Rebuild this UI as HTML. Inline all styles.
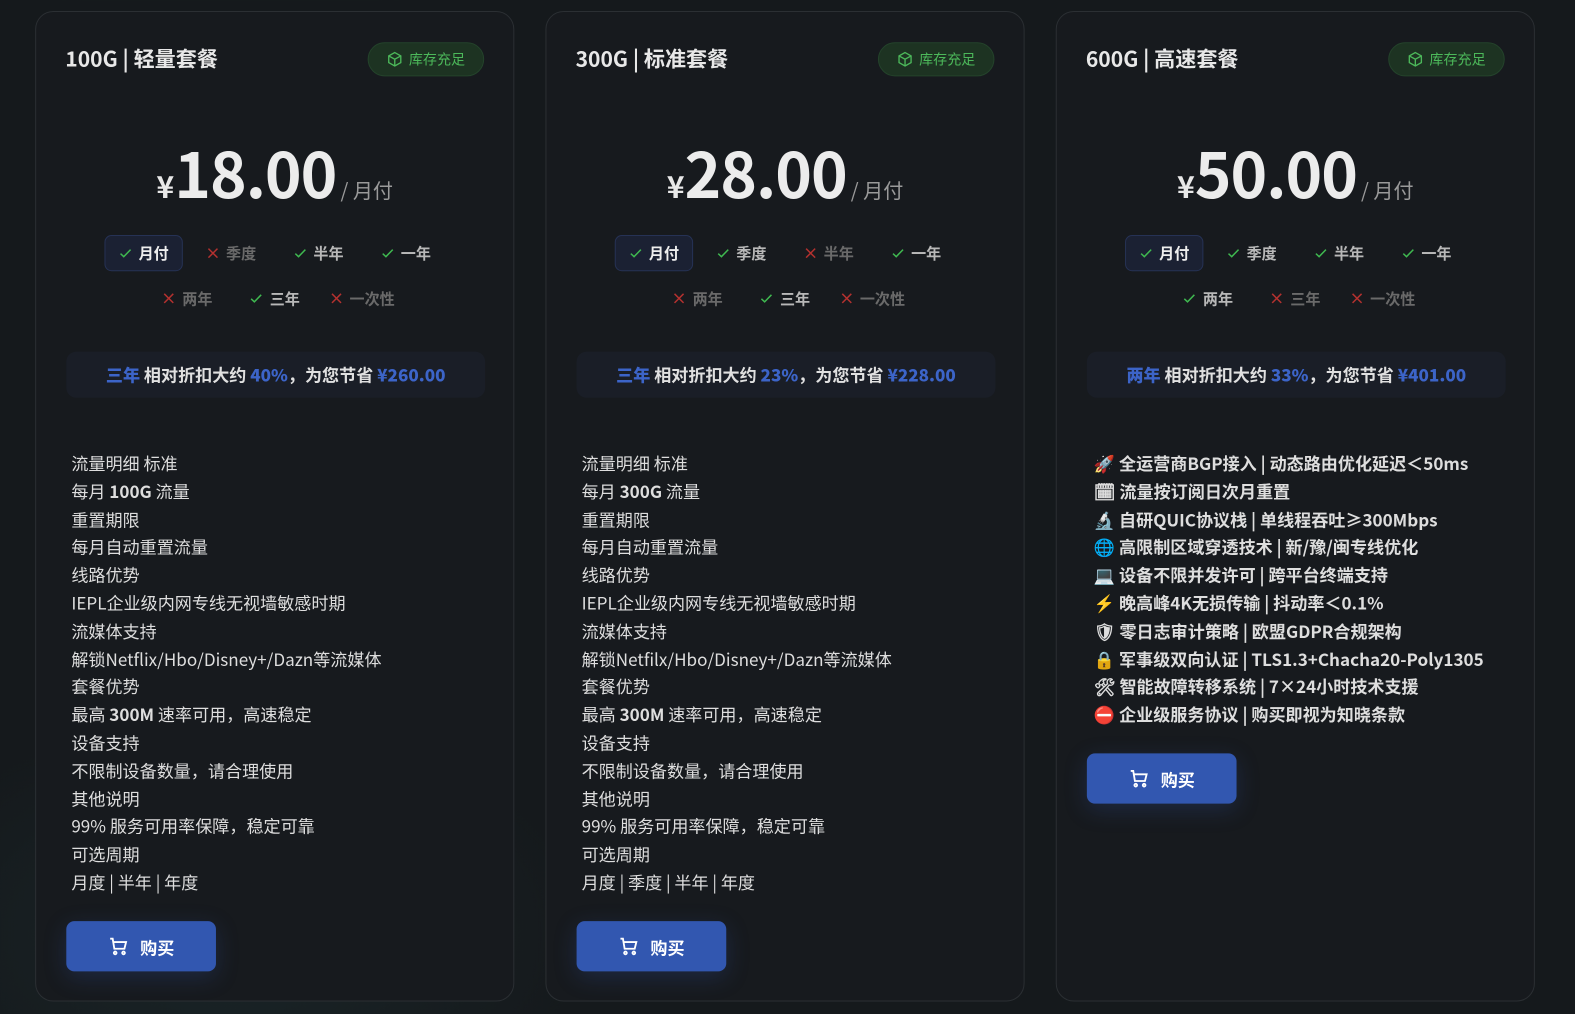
<!DOCTYPE html>
<html style="width:1575px;height:1014px;overflow:hidden"><head><meta charset="utf-8"><style>
*{box-sizing:border-box;margin:0;padding:0}
html,body{width:1575px;height:1014px;overflow:hidden}
body{background:radial-gradient(ellipse 360px 220px at 230px 935px,rgba(32,52,54,.45),rgba(0,0,0,0)),#15191c;font-family:"Noto Sans CJK SC","Liberation Sans",sans-serif;position:relative;color:#e6e6e6}
.wrap{position:absolute;left:0;top:0;width:1568px;height:1010px;transform:scale(1.0045);transform-origin:0 0}
.card{position:absolute;top:11px;width:477px;height:986px;border:1px solid #2b2f33;border-radius:18px;background:#171a1e}
.title{position:absolute;left:29px;top:31px;font-size:21px;font-weight:bold;color:#e8e8e8;line-height:30px}
.badge{position:absolute;left:330px;top:30px;width:116px;height:34px;border-radius:17px;background:#1d3322;border:1px solid #24432b;color:#4cb85a;font-size:14px;display:flex;align-items:center;justify-content:center;gap:6px}
.price{position:absolute;left:0;right:0;top:118px;text-align:center;white-space:nowrap;line-height:80px}
.price .y{font-size:30px;font-weight:bold;color:#e8e8e8}
.price .n{font-size:62px;font-weight:bold;color:#ececec;letter-spacing:-1px}
.price .u{font-size:20px;color:#9a9a9a;margin-left:4px}
.rows{position:absolute;left:0;right:0;top:222px}
.row{display:flex;justify-content:center;gap:9px;height:36px;margin-bottom:9px}
.chip{width:78px;height:36px;display:flex;align-items:center;justify-content:center;gap:6px;font-size:15px;font-weight:bold;border-radius:7px;border:1px solid transparent}
.chip.sel{background:#1b2133;border-color:#263255;color:#eee}
.chip.on{color:#b8b8b8}
.chip.off{color:#6a6a6a}
.save{position:absolute;left:30px;top:338px;width:417px;height:46px;border-radius:10px;background:#1a1e27;display:flex;align-items:center;justify-content:center;font-size:17px;font-weight:bold;color:#e0e0e0;line-height:46px}
.save b{color:#3c64c8}
.feat{position:absolute;left:35px;top:435px;font-size:17px;line-height:27.8px;color:#dedede}
.feat.e{left:37px;font-weight:bold}
.btn{position:absolute;left:30px;width:149px;height:50px;border-radius:8px;background:#3257b0;color:#fff;font-size:17px;font-weight:bold;display:flex;align-items:center;justify-content:center;gap:12px;box-shadow:0 6px 22px rgba(50,87,176,.25)}
</style></head><body>
<svg width="0" height="0" style="position:absolute;left:0;top:0"><defs>
<symbol id="ck" viewBox="0 0 14 14"><path d="M2 7.5l3.2 3L12 3.5" fill="none" stroke="#3fb950" stroke-width="1.5"/></symbol>
<symbol id="xx" viewBox="0 0 14 14"><path d="M2.5 2.5l9 9M11.5 2.5l-9 9" fill="none" stroke="#b3312f" stroke-width="1.5"/></symbol>
</defs></svg>
<div class="wrap">

<div class="card" style="left:35px">
 <div class="title">100G | 轻量套餐</div>
 <div class="badge"><svg width="16" height="16" viewBox="0 0 24 24" fill="none" stroke="#4cb85a" stroke-width="2"><path d="M12 2l9 5v10l-9 5-9-5V7z"/><path d="M3 7l9 5 9-5M12 12v10"/></svg>库存充足</div>
 <div class="price"><span class="y">¥</span><span class="n">18.00</span><span class="u">/ 月付</span></div>
 <div class="rows">
  <div class="row"><div class="chip sel"><svg width="14" height="14"><use href="#ck"/></svg>月付</div><div class="chip off"><svg width="14" height="14"><use href="#xx"/></svg>季度</div><div class="chip on"><svg width="14" height="14"><use href="#ck"/></svg>半年</div><div class="chip on"><svg width="14" height="14"><use href="#ck"/></svg>一年</div></div>
  <div class="row"><div class="chip off"><svg width="14" height="14"><use href="#xx"/></svg>两年</div><div class="chip on"><svg width="14" height="14"><use href="#ck"/></svg>三年</div><div class="chip off"><svg width="14" height="14"><use href="#xx"/></svg>一次性</div></div>
 </div>
 <div class="save"><b>三年</b>&nbsp;相对折扣大约&nbsp;<b>40%</b>，为您节省&nbsp;<b>¥260.00</b></div>
 <div class="feat">流量明细 标准<br>每月 <b>100G</b> 流量<br>重置期限<br>每月自动重置流量<br>线路优势<br>IEPL企业级内网专线无视墙敏感时期<br>流媒体支持<br>解锁Netflix/Hbo/Disney+/Dazn等流媒体<br>套餐优势<br>最高 <b>300M</b> 速率可用，高速稳定<br>设备支持<br>不限制设备数量，请合理使用<br>其他说明<br>99% 服务可用率保障，稳定可靠<br>可选周期<br>月度 | 半年 | 年度</div>
 <div class="btn" style="top:905px"><svg width="20" height="20" viewBox="0 0 24 24" fill="none" stroke="#fff" stroke-width="2.2"><path d="M2 3h3l2 12h12l2-8H6"/><circle cx="8" cy="20" r="1.6"/><circle cx="18" cy="20" r="1.6"/></svg>购买</div>
</div>

<div class="card" style="left:543px">
 <div class="title">300G | 标准套餐</div>
 <div class="badge"><svg width="16" height="16" viewBox="0 0 24 24" fill="none" stroke="#4cb85a" stroke-width="2"><path d="M12 2l9 5v10l-9 5-9-5V7z"/><path d="M3 7l9 5 9-5M12 12v10"/></svg>库存充足</div>
 <div class="price"><span class="y">¥</span><span class="n">28.00</span><span class="u">/ 月付</span></div>
 <div class="rows">
  <div class="row"><div class="chip sel"><svg width="14" height="14"><use href="#ck"/></svg>月付</div><div class="chip on"><svg width="14" height="14"><use href="#ck"/></svg>季度</div><div class="chip off"><svg width="14" height="14"><use href="#xx"/></svg>半年</div><div class="chip on"><svg width="14" height="14"><use href="#ck"/></svg>一年</div></div>
  <div class="row"><div class="chip off"><svg width="14" height="14"><use href="#xx"/></svg>两年</div><div class="chip on"><svg width="14" height="14"><use href="#ck"/></svg>三年</div><div class="chip off"><svg width="14" height="14"><use href="#xx"/></svg>一次性</div></div>
 </div>
 <div class="save"><b>三年</b>&nbsp;相对折扣大约&nbsp;<b>23%</b>，为您节省&nbsp;<b>¥228.00</b></div>
 <div class="feat">流量明细 标准<br>每月 <b>300G</b> 流量<br>重置期限<br>每月自动重置流量<br>线路优势<br>IEPL企业级内网专线无视墙敏感时期<br>流媒体支持<br>解锁Netfilx/Hbo/Disney+/Dazn等流媒体<br>套餐优势<br>最高 <b>300M</b> 速率可用，高速稳定<br>设备支持<br>不限制设备数量，请合理使用<br>其他说明<br>99% 服务可用率保障，稳定可靠<br>可选周期<br>月度 | 季度 | 半年 | 年度</div>
 <div class="btn" style="top:905px"><svg width="20" height="20" viewBox="0 0 24 24" fill="none" stroke="#fff" stroke-width="2.2"><path d="M2 3h3l2 12h12l2-8H6"/><circle cx="8" cy="20" r="1.6"/><circle cx="18" cy="20" r="1.6"/></svg>购买</div>
</div>

<div class="card" style="left:1051px">
 <div class="title">600G | 高速套餐</div>
 <div class="badge"><svg width="16" height="16" viewBox="0 0 24 24" fill="none" stroke="#4cb85a" stroke-width="2"><path d="M12 2l9 5v10l-9 5-9-5V7z"/><path d="M3 7l9 5 9-5M12 12v10"/></svg>库存充足</div>
 <div class="price"><span class="y">¥</span><span class="n">50.00</span><span class="u">/ 月付</span></div>
 <div class="rows">
  <div class="row"><div class="chip sel"><svg width="14" height="14"><use href="#ck"/></svg>月付</div><div class="chip on"><svg width="14" height="14"><use href="#ck"/></svg>季度</div><div class="chip on"><svg width="14" height="14"><use href="#ck"/></svg>半年</div><div class="chip on"><svg width="14" height="14"><use href="#ck"/></svg>一年</div></div>
  <div class="row"><div class="chip on"><svg width="14" height="14"><use href="#ck"/></svg>两年</div><div class="chip off"><svg width="14" height="14"><use href="#xx"/></svg>三年</div><div class="chip off"><svg width="14" height="14"><use href="#xx"/></svg>一次性</div></div>
 </div>
 <div class="save"><b>两年</b>&nbsp;相对折扣大约&nbsp;<b>33%</b>，为您节省&nbsp;<b>¥401.00</b></div>
 <div class="feat e">🚀 全运营商BGP接入 | 动态路由优化延迟＜50ms<br>🗓 流量按订阅日次月重置<br>🔬 自研QUIC协议栈 | 单线程吞吐≥300Mbps<br>🌐 高限制区域穿透技术 | 新/豫/闽专线优化<br>💻 设备不限并发许可 | 跨平台终端支持<br>⚡ 晚高峰4K无损传输 | 抖动率＜0.1%<br>🛡 零日志审计策略 | 欧盟GDPR合规架构<br>🔒 军事级双向认证 | TLS1.3+Chacha20-Poly1305<br>🛠 智能故障转移系统 | 7×24小时技术支援<br>⛔ 企业级服务协议 | 购买即视为知晓条款</div>
 <div class="btn" style="top:738px"><svg width="20" height="20" viewBox="0 0 24 24" fill="none" stroke="#fff" stroke-width="2.2"><path d="M2 3h3l2 12h12l2-8H6"/><circle cx="8" cy="20" r="1.6"/><circle cx="18" cy="20" r="1.6"/></svg>购买</div>
</div>
</div>
</body></html>
